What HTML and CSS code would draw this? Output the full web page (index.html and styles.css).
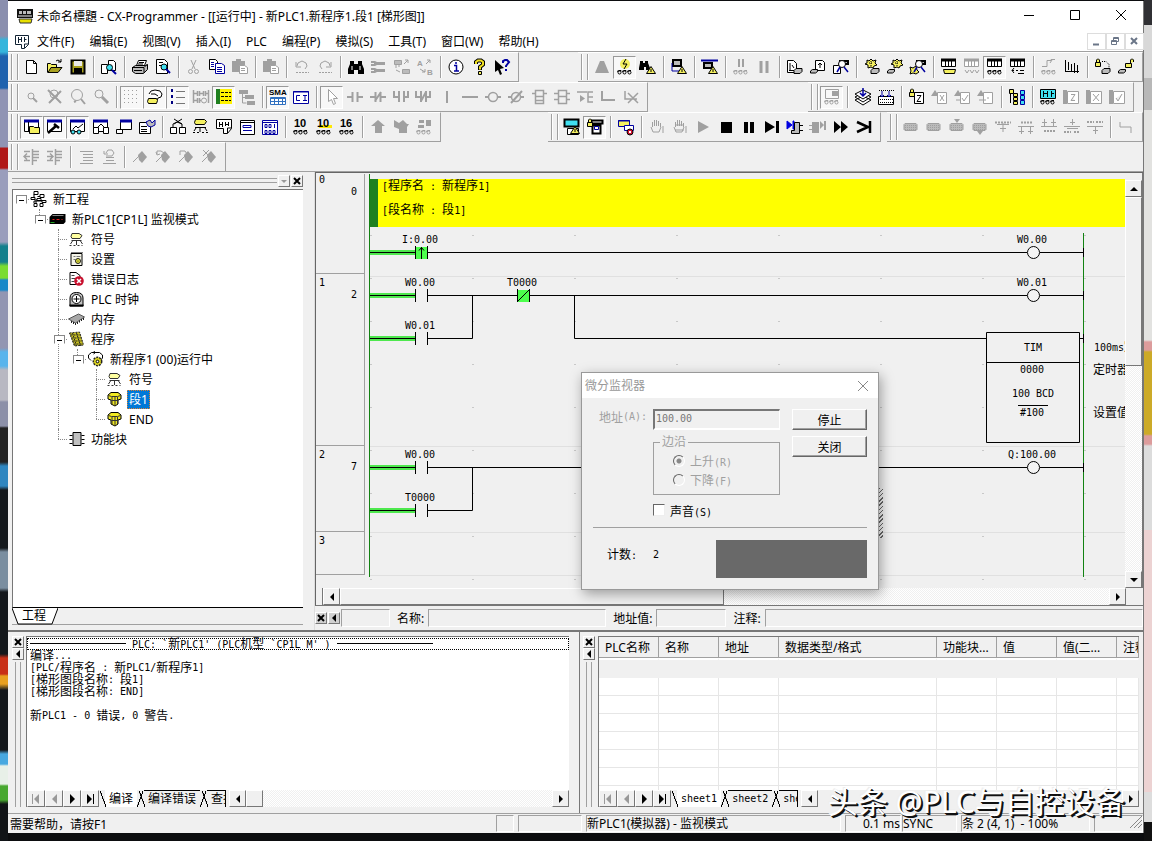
FILE: index.html
```html
<!DOCTYPE html>
<html lang="zh-CN">
<head>
  <meta charset="UTF-8">
  <meta name="viewport" content="width=device-width, initial-scale=1">
  <title>CX-Programmer</title>
  <link rel="stylesheet" href="styles.css">
</head>
<body>

<div class="window">

  <header class="titlebar">
    <svg class="app-icon" width="18" height="16" viewBox="0 0 18 16"><path d="M1 1h16v9H1z" fill="#111"/><path d="M3 3h3v3H3zM7 3h3v3H7zM11 3h4v3h-4z" fill="#bbb"/><path d="M2 8h14" stroke="#eee"/><path d="M3 11h13l-1 4H4z" fill="#e8e000" stroke="#333"/></svg>
    <h1>未命名標題 - CX-Programmer - [[运行中] - 新PLC1.新程序1.段1 [梯形图]]</h1>
    <div class="caption">
      <button type="button" aria-label="最小化"><svg width="12" height="12"><path d="M1 6.5h10"/></svg></button>
      <button type="button" aria-label="最大化"><svg width="12" height="12"><path d="M1.5 1.5h9v9h-9z"/></svg></button>
      <button type="button" aria-label="关闭"><svg width="12" height="12"><path d="M1 1l10 10M11 1L1 11"/></svg></button>
    </div>
  </header>

  <nav class="menubar">
    <svg class="doc-icon" width="16" height="15"><path d="M1.500 1.500h13v9l-4 4h-3v-4h-6zM4.500 3v6M4.500 5.500h3M7.500 3v5M10.500 3v5M10.500 5.500h2M10.500 14v-4h4"/></svg>
    <a href="#">文件(F)</a>
    <a href="#">编辑(E)</a>
    <a href="#">视图(V)</a>
    <a href="#">插入(I)</a>
    <a href="#">PLC</a>
    <a href="#">编程(P)</a>
    <a href="#">模拟(S)</a>
    <a href="#">工具(T)</a>
    <a href="#">窗口(W)</a>
    <a href="#">帮助(H)</a>
    <div class="mdi">
      <button type="button" aria-label="最小化"><svg width="11" height="11"><path d="M2 8.500h6" stroke-width="2"/></svg></button>
      <button type="button" aria-label="还原"><svg width="11" height="11"><path d="M1.500 4.500h5v4h-5zM3.500 4V1.500h5v4H7M1 5.500h6M3 2.500h6"/></svg></button>
      <button type="button" aria-label="关闭"><svg width="11" height="11"><path d="M2 2l6 6M8 2L2 8" stroke-width="2"/></svg></button>
    </div>
  </nav>

  <!-- los botones se generan en toolbars.js -->
  <div class="toolbars" id="toolbars"></div>

  <main class="workspace">
    <aside class="project">
      <div class="pane-head">
        <span class="grip"></span>
        <button type="button" class="mini off" aria-label="菜单"><svg width="8" height="8"><path d="M1 3h6L4 6z"/></svg></button>
        <button type="button" class="mini" aria-label="关闭"><svg width="8" height="8"><path d="M1 1l6 6M7 1L1 7" class="line"/></svg></button>
      </div>
      <div class="tree">
        <ul>
          <li><div class="node"><i class="box"></i><svg><use href="#t-project"/></svg><span>新工程</span></div>
            <ul>
              <li><div class="node"><i class="box"></i><svg><use href="#t-plc"/></svg><span>新PLC1[CP1L] 监视模式</span></div>
                <ul>
                  <li><div class="node"><i></i><svg><use href="#t-symbol"/></svg><span>符号</span></div></li>
                  <li><div class="node"><i></i><svg><use href="#t-settings"/></svg><span>设置</span></div></li>
                  <li><div class="node"><i></i><svg><use href="#t-error"/></svg><span>错误日志</span></div></li>
                  <li><div class="node"><i></i><svg><use href="#t-clock"/></svg><span>PLC 时钟</span></div></li>
                  <li><div class="node"><i></i><svg><use href="#t-memory"/></svg><span>内存</span></div></li>
                  <li><div class="node"><i class="box"></i><svg><use href="#t-programs"/></svg><span>程序</span></div>
                    <ul>
                      <li><div class="node"><i class="box"></i><svg><use href="#t-program"/></svg><span>新程序1 (00)运行中</span></div>
                        <ul>
                          <li><div class="node"><i></i><svg><use href="#t-symbol"/></svg><span>符号</span></div></li>
                          <li><div class="node"><i></i><svg><use href="#t-section"/></svg><span class="selected">段1</span></div></li>
                          <li><div class="node"><i></i><svg><use href="#t-section"/></svg><span>END</span></div></li>
                        </ul>
                      </li>
                    </ul>
                  </li>
                  <li><div class="node"><i></i><svg><use href="#t-block"/></svg><span>功能块</span></div></li>
                </ul>
              </li>
            </ul>
          </li>
        </ul>
      </div>
      <div class="tree-tabs"><svg width="46" height="17"><path d="M0 0h46l-5 16H6z" fill="#fff"/><path d="M0 0l6 16h34l6-16" fill="none" stroke="#000"/><text x="10" y="12">工程</text></svg></div>
    </aside>

    <section class="editor">
      <div class="ladder">
        <div class="gutter">
          <div class="rung r0"><b>0</b><em>0</em></div>
          <div class="rung r1"><b>1</b><em>2</em></div>
          <div class="rung r2"><b>2</b><em>7</em></div>
          <div class="rung r3"><b>3</b></div>
        </div>
        <svg class="diagram" role="img" aria-label="梯形图">
          <defs>
            <pattern id="dots" width="102" height="43" patternUnits="userSpaceOnUse" x="4" y="18"><path d="M0 0h2v1h-2z" fill="#c8c8c8"/></pattern>
          </defs>
          <rect x="4" y="56" width="100%" height="350" fill="url(#dots)"/>
          <path d="M4 102.500h756M4 272.500h756M4 358.500h756M4 401.500h756" stroke="#e0e0e0"/>
          <rect x="3" y="5" width="100%" height="48" fill="#ff0"/>
          <rect x="4" y="5" width="8" height="48" fill="#208020"/>
          <g class="live"><path d="M4 78.500h45M4 121.500h45M4 164.500h45M4 293.500h45M4 336.500h45"/></g>
          <rect x="50" y="73" width="11" height="12" fill="#4dff4d"/>
          <rect x="152" y="116" width="11" height="12" fill="#4dff4d"/>
          <g class="wire">
            <path d="M4 78.500h45M62 78.500h599M674 78.500h44"/>
            <path d="M4 121.500h45M62 121.500h89M164 121.500h497M674 121.500h44"/>
            <path d="M4 164.500h45M62 164.500h44.500V122M208.500 121v43.500H620M714 164.500h4"/>
            <path d="M4 293.500h45M62 293.500h599M674 293.500h44"/>
            <path d="M4 336.500h45M62 336.500h44.500V294"/>
            <path d="M49.500 72v13M61.500 72v13M49.500 115v13M61.500 115v13M49.500 158v13M61.500 158v13M49.500 287v13M61.500 287v13M49.500 330v13M61.500 330v13M151.500 115v13M163.500 115v13"/>
            <path d="M55.500 73v12M53 76.500l2.500-3 2.500 3M152 127l11-11"/>
            <circle cx="667.500" cy="78.500" r="6"/><circle cx="667.500" cy="121.500" r="6"/><circle cx="667.500" cy="293.500" r="6"/>
            <path d="M620.500 158.500h93v110h-93zM620 188.500h94M652 231.500h30"/>
          </g>
          <g fill="#128212"><rect x="3" y="0" width="1" height="403"/><rect x="717" y="59" width="1" height="344"/></g>
          <path d="M717.500 74v9M717.500 117v9M717.500 160v9M717.500 289v9" stroke="#000"/>
          <g class="code">
            <text x="16" y="16">[<tspan class="zh">程序名</tspan> : <tspan class="zh">新程序</tspan>1]</text>
            <text x="16" y="40">[<tspan class="zh">段名称</tspan> : <tspan class="zh">段</tspan>1]</text>
          </g>
          <g class="code mid">
            <text x="54" y="69">I:0.00</text>
            <text x="54" y="112">W0.00</text>
            <text x="54" y="155">W0.01</text>
            <text x="54" y="284">W0.00</text>
            <text x="54" y="327">T0000</text>
            <text x="156" y="112">T0000</text>
            <text x="666" y="69">W0.00</text>
            <text x="666" y="112">W0.01</text>
            <text x="666" y="284">Q:100.00</text>
            <text x="667" y="177">TIM</text>
            <text x="666" y="199">0000</text>
            <text x="667" y="223">100 BCD</text>
            <text x="666" y="242">#100</text>
          </g>
          <g class="code">
            <text x="728" y="177">100ms<tspan class="zh">定</tspan></text>
            <text x="727" y="200" class="zh">定时器</text>
            <text x="727" y="243" class="zh">设置值</text>
          </g>
        </svg>
        <div class="vscroll">
          <button type="button" class="sb" aria-label="向上"><svg width="8" height="8"><path d="M0 6h8L4 2z"/></svg></button>
          <div class="thumb"></div>
          <div class="track"></div>
          <button type="button" class="sb" aria-label="向下"><svg width="8" height="8"><path d="M0 2h8L4 6z"/></svg></button>
        </div>
      </div>
      <div class="hscroll">
        <span class="splitter"></span>
        <button type="button" class="sb" aria-label="向左"><svg width="8" height="8"><path d="M6 0v8L2 4z"/></svg></button>
        <div class="thumb"></div>
        <div class="track"></div>
        <button type="button" class="sb" aria-label="向右"><svg width="8" height="8"><path d="M2 0v8l4-4z"/></svg></button>
      </div>
      <div class="infobar">
        <button type="button" class="mini dark" aria-label="关闭"><svg width="8" height="8"><path d="M1 1l6 6M7 1L1 7" class="line"/></svg></button>
        <button type="button" class="mini dark" aria-label="收起"><svg width="8" height="8"><path d="M6 0v8L2 4z"/></svg></button>
        <output class="field short"></output>
        <span>名称:</span><output class="field name"></output>
        <span>地址值:</span><output class="field addr"></output>
        <span>注释:</span><output class="field note"></output>
      </div>
    </section>
  </main>

  <section class="bottom">
    <div class="panel output">
      <div class="side">
        <button type="button" class="mini" aria-label="关闭"><svg width="8" height="8"><path d="M1 1l6 6M7 1L1 7" class="line"/></svg></button>
        <button type="button" class="mini" aria-label="收起"><svg width="8" height="8"><path d="M6 0v8L2 4z"/></svg></button>
        <span class="grip"></span>
      </div>
      <div class="sunken">
        <div class="log">
          <p class="focus"><s></s><span>PLC: `<b>新</b>PLC1' (PLC<b>机型</b> `CP1L M' )</span><s></s></p>
          <p><b>编译</b>...</p>
          <p>[PLC/<b>程序名</b> : <b>新</b>PLC1/<b>新程序</b>1]</p>
          <p>[<b>梯形图段名称</b>: <b>段</b>1]</p>
          <p>[<b>梯形图段名称</b>: END]</p>
          <p>&nbsp;</p>
          <p><b>新</b>PLC1 - 0 <b>错误</b>, 0 <b>警告</b>.</p>
        </div>
        <div class="tabstrip">
          <button type="button" class="sb off" aria-label="第一"><svg width="10" height="10"><path d="M8 0v10L3 5zM1 0h1v10h-1z"/></svg></button>
          <button type="button" class="sb off" aria-label="上一"><svg width="10" height="10"><path d="M8 0v10L3 5z"/></svg></button>
          <button type="button" class="sb" aria-label="下一"><svg width="10" height="10"><path d="M3 0v10l5-5z"/></svg></button>
          <button type="button" class="sb" aria-label="最后"><svg width="10" height="10"><path d="M2 0v10l5-5zM8 0h1v10h-1z"/></svg></button>
          <div class="tabs">
            <button type="button" class="tab active">编译</button>
            <button type="button" class="tab">编译错误</button>
            <button type="button" class="tab">查找</button>
          </div>
          <div class="scroller">
            <button type="button" class="sb" aria-label="向左"><svg width="8" height="8"><path d="M6 0v8L2 4z"/></svg></button>
            <div class="thumb"></div>
            <div class="track"></div>
            <button type="button" class="sb" aria-label="向右"><svg width="8" height="8"><path d="M2 0v8l4-4z"/></svg></button>
          </div>
        </div>
      </div>
    </div>

    <div class="panel watch">
      <div class="side">
        <button type="button" class="mini" aria-label="关闭"><svg width="8" height="8"><path d="M1 1l6 6M7 1L1 7" class="line"/></svg></button>
        <button type="button" class="mini" aria-label="收起"><svg width="8" height="8"><path d="M6 0v8L2 4z"/></svg></button>
        <span class="grip"></span>
      </div>
      <div class="sunken">
        <div class="sheet">
          <table>
            <colgroup><col class="c60"><col class="c60"><col class="c60"><col class="c158"><col class="c60"><col class="c60"><col class="c60"><col></colgroup>
            <thead><tr><th>PLC名称</th><th>名称</th><th>地址</th><th>数据类型/格式</th><th>功能块...</th><th>值</th><th>值(二...</th><th>注释</th></tr></thead>
            <tbody id="rows"></tbody>
          </table>
        </div>
        <div class="tabstrip">
          <button type="button" class="sb off" aria-label="第一"><svg width="10" height="10"><path d="M8 0v10L3 5zM1 0h1v10h-1z"/></svg></button>
          <button type="button" class="sb off" aria-label="上一"><svg width="10" height="10"><path d="M8 0v10L3 5z"/></svg></button>
          <button type="button" class="sb" aria-label="下一"><svg width="10" height="10"><path d="M3 0v10l5-5z"/></svg></button>
          <button type="button" class="sb" aria-label="最后"><svg width="10" height="10"><path d="M2 0v10l5-5zM8 0h1v10h-1z"/></svg></button>
          <div class="tabs code">
            <button type="button" class="tab active">sheet1</button>
            <button type="button" class="tab">sheet2</button>
            <button type="button" class="tab">sheet3</button>
          </div>
          <div class="scroller">
            <button type="button" class="sb" aria-label="向左"><svg width="8" height="8"><path d="M6 0v8L2 4z"/></svg></button>
            <div class="track plain"></div>
            <button type="button" class="sb" aria-label="向右"><svg width="8" height="8"><path d="M2 0v8l4-4z"/></svg></button>
          </div>
        </div>
      </div>
    </div>
  </section>

  <footer class="status">
    <span class="help">需要帮助，请按F1</span>
    <span class="cell s1"></span>
    <span class="cell s2"></span>
    <span class="cell s3">新PLC1(模拟器) - 监视模式</span>
    <span class="cell s4">0.1 ms</span>
    <span class="cell s5">SYNC</span>
    <span class="cell s6">条 2 (4, 1) &nbsp;- 100%</span>
    <span class="cell s7"><svg width="12" height="12"><path d="M0 12L12 0M4 12l8-8M8 12l4-4" stroke="#888"/></svg></span>
  </footer>

  <div class="hatch"></div>

  <form class="dialog">
    <div class="dialog-title">
      <span>微分监视器</span>
      <button type="button" aria-label="关闭"><svg width="12" height="12"><path d="M1 1l10 10M11 1L1 11"/></svg></button>
    </div>
    <div class="dialog-body">
      <label class="off" for="address"><b>地址</b>(A):</label>
      <input type="text" id="address" value="100.00" disabled>
      <div class="actions">
        <button type="button">停止</button>
        <button type="button">关闭</button>
      </div>
      <fieldset disabled>
        <legend>边沿</legend>
        <label><input type="radio" name="edge" checked><span><b>上升</b>(R)</span></label>
        <label><input type="radio" name="edge"><span><b>下降</b>(F)</span></label>
      </fieldset>
      <label class="sound"><input type="checkbox"><span><b>声音</b>(S)</span></label>
      <hr>
      <div class="count"><b>计数</b>:</div>
      <div class="value">2</div>
      <div class="lamp"></div>
    </div>
  </form>

  <div class="watermark">头条 @PLC与自控设备</div>
</div>

<!-- iconos del árbol -->
<svg class="symbols" width="0" height="0">
  <symbol id="t-project" viewBox="0 0 16 16"><g fill="#fff" stroke="#000"><path d="M3.500 3v4M7 5.500h3M5.500 8v4M10 9.500h3M3.500 12v-2h9v2"/><path d="M3.500.500h4v3h-4zM9.500 3.500h4v3h-4zM.500 6.500h4v2h-4zM6.500 7.500h4v2h-4zM11.500 9.500h4v2h-4zM3.500 12.500h3v3h-3zM9.500 12.500h3v3h-3z"/></g></symbol>
  <symbol id="t-plc" viewBox="0 0 16 16"><path d="M0 6l3-3h13v8l-2 2H0z" fill="#000"/><path d="M3 4.500h11" stroke="#888"/><path d="M3 8.500h2M7 8.500h3M12 8.500h1" stroke="#e02020"/><path d="M1 11.500h4" stroke="#20a020"/></symbol>
  <symbol id="t-symbol" viewBox="0 0 16 16"><path d="M3.500 2.500h7l3 2-2 3h-8l-1-2z" fill="#ffffa0" stroke="#333"/><path d="M3 9.500h10M4 10l-2 3M8 10v4M12 10l2 3M1 14.500h2M5 14.500h2M9 14.500h2M13 14.500h1" stroke="#333"/></symbol>
  <symbol id="t-settings" viewBox="0 0 16 16"><path d="M2.500 2.500h11v12h-11z" fill="#f4f4e8" stroke="#000" /><path d="M3 1.500h11" stroke="#000" stroke-dasharray="1 1"/><path d="M5 5.500h2M8 5.500h4M5 8.500h2" stroke="#777"/><circle cx="9.500" cy="10" r="2.500" fill="#e8e840" stroke="#222"/><circle cx="9.500" cy="10" r=".6" fill="#000"/></symbol>
  <symbol id="t-error" viewBox="0 0 16 16"><path d="M1.500 1.500h6l4 3v9h-10z" fill="#fff" stroke="#000"/><path d="M3 4.500h3M3 7.500h4M3 10.500h3" stroke="#444"/><circle cx="10.500" cy="10" r="4.800" fill="#c8102e"/><path d="M8.500 8l4 4M12.500 8l-4 4" stroke="#fff" stroke-width="1.500"/></symbol>
  <symbol id="t-clock" viewBox="0 0 16 16"><path d="M1.500 15V7q0-5.500 6.500-5.500T14.500 7v8z" fill="#c0c0c0" stroke="#000"/><circle cx="8" cy="8" r="4.500" fill="#fff" stroke="#000"/><path d="M8 5v6M5 8h6" stroke="#000"/><path d="M1 14.500h14" stroke="#000" stroke-width="2"/></symbol>
  <symbol id="t-memory" viewBox="0 0 16 16"><path d="M0 8l10-5 6 3-9 6z" fill="#a8a8a8" stroke="#555"/><path d="M7 12v2M9 11v2M11 9.500v2M13 8v2M15 7v2M3 10v2M5 11v2" stroke="#222"/></symbol>
  <symbol id="t-programs" viewBox="0 0 16 16"><path d="M1 2l10-1 4 13-9 1z" fill="#c8c020"/><path d="M1 2l10-1 4 13-9 1z M2 4h10M3 7h10M4 10h10M5 13h9M4 2l4 13M8 2l4 13" fill="none" stroke="#222" stroke-dasharray="2 1"/></symbol>
  <symbol id="t-program" viewBox="0 0 16 16"><path d="M3.500 9.500L1 7V4l3-2.500h8L15 4v3l-2 2.500" fill="#fff" stroke="#000"/><path d="M6 0l2 1.500L6 3" fill="none" stroke="#000"/><circle cx="10" cy="10.500" r="4.200" fill="#d8d020" stroke="#222" stroke-width="1.500" stroke-dasharray="2 1"/><circle cx="10" cy="10.500" r="1.300" fill="#fff" stroke="#000"/></symbol>
  <symbol id="t-section" viewBox="0 0 16 16"><path d="M1.500 4l3-2.500h7l3 2.500v4l-3 1v4l-3 2-4-2V9l-3-1z" fill="#f0e820" stroke="#000"/><path d="M2 4.500l3 1h6l3-1M5.500 6v7M8.500 6v8M11 6v7M5 9.500h6" stroke="#333" fill="none"/></symbol>
  <symbol id="t-block" viewBox="0 0 16 16"><path d="M4.500 1.500h8v13h-8z" fill="#c0c0c0" stroke="#000"/><path d="M1 4.500h3M1 8.500h3M1 12.500h3M13 4.500h3M13 8.500h3M13 12.500h3" stroke="#000"/></symbol>
</svg>

<script src="toolbars.js"></script>
</body>
</html>
```

FILE: styles.css
```css
* {
  box-sizing: border-box;
}
html, body {
  height: 100%;
}
body {
  margin: 0;
  padding: 1px 8px 8px;
  font-family: "Noto Sans", "Noto Sans CJK SC", sans-serif;
  font-size: 12px;
  color: #000;
  overflow: hidden;
  background:
    linear-gradient(#303034 25px, #d8d8d8 25px 78px, #b8b8b8 78px 110px, #e2e2e0 110px 340px, #dc9c9c 342px 350px, #ccaa28 352px 434px, #dc9c9c 436px 444px, #dcdcdc 446px 530px, #ecd2d2 530px 792px, #ddd 792px 822px, #111 822px) right / 8px 100% no-repeat,
    linear-gradient(#8a8fae 36px, #35b5dc 40px 52px, #1f62ae 56px 88px, #9094b4 90px 147px, #b01818 148px 168px, #9a9ebc 170px 242px, #14808c 246px 262px, #7adc30 266px 278px, #1888c8 280px 290px, #9296b2 292px 348px, #58b4ec 352px 366px, #b8b8c2 370px 400px, #8c90a8 402px 426px, #222 428px 462px, #2f86c0 466px 486px, #15191d 490px 548px, #7a8ea0 552px 588px, #14181c 592px 654px, #c83018 658px 674px, #e8a020 676px 684px, #14181c 690px 750px, #48a8e0 754px 764px, #e8f0e8 766px 784px, #48a830 786px 800px, #111417 804px) left / 8px 100% no-repeat,
    #0c0d0f;
}
button, input {
  font-family: inherit;
  font-size: 12px;
  color: inherit;
}
button {
  padding: 0;
  border: 0;
  background: none;
}
b, em {
  font-weight: normal;
  font-style: normal;
}

.window {
  position: relative;
  display: flex;
  flex-direction: column;
  height: 100%;
  background: #f0f0f0;
  border-right: 1px solid #777;
}

/* título y menú */
.titlebar {
  display: flex;
  align-items: center;
  height: 30px;
  padding-left: 8px;
  background: #fff;
}
.titlebar h1 {
  flex: 1;
  margin: 0 0 0 3px;
  font-size: 12px;
  font-weight: normal;
}
.caption {
  display: flex;
  margin-right: -1px;
}
.caption button {
  width: 46px;
  height: 28px;
}
.caption svg, .dialog-title svg {
  stroke: #000;
  fill: none;
}
.menubar {
  display: flex;
  align-items: center;
  gap: 15px;
  height: 20px;
  padding-left: 6px;
  background: #fff;
}
.menubar a {
  color: #000;
  text-decoration: none;
}
.doc-icon {
  margin-right: -8px;
  fill: none;
  stroke: #123;
}
.mdi {
  display: flex;
  margin-left: auto;
  margin-right: -1px;
}
.mdi button {
  width: 19px;
  height: 17px;
  border: 1px solid #ddd;
}
.mdi svg {
  fill: none;
  stroke: #6b7688;
}

/* barras de herramientas */
.toolbars {
  border-top: 1px solid #a0a0a0;
  border-bottom: 1px solid #a0a0a0;
}
.row {
  display: flex;
  height: 30px;
  gap: 6px;
}
.row-2 {
  padding-right: 9px;
}
.group {
  display: flex;
  align-items: center;
  padding: 0 5px 0 3px;
  border-right: 1px solid #a0a0a0;
  border-bottom: 1px solid #a0a0a0;
  border-top: 1px solid #fff;
}
.row-4 {
  height: 29px;
}
.row-4 .group {
  border-bottom: 0;
}
.group.push {
  margin-left: auto;
}
.group::before {
  content: "";
  width: 5px;
  height: 26px;
  margin-right: 2px;
  border: solid #a0a0a0;
  border-width: 0 1px;
  box-shadow: inset 1px 0 #fff, 1px 0 #fff;
}
.sep {
  width: 8px;
  height: 22px;
  background: linear-gradient(90deg, transparent 4px, #a0a0a0 4px 5px, #fff 5px 6px, transparent 6px);
}
.tool {
  display: flex;
  align-items: center;
  justify-content: center;
  width: 23px;
  height: 23px;
  border: 1px solid transparent;
}
.tool.on {
  background: #f8f8f8;
  border-color: #999 #fff #fff #999;
}
.tool svg {
  width: 18px;
  height: 18px;
  fill: none;
  stroke: currentColor;
}
.tool:disabled {
  color: #a0a0a0;
}
.tool .w { fill: #fff; }
.tool .y { fill: #f4f060; }
.tool .o { fill: #a8a020; }
.tool .c { fill: #40e0f0; }
.tool .b { stroke: #0000a0; }
.tool .s { fill: currentColor; stroke: none; }
.tool .gy { fill: #bbb; }
.tool:disabled .y, .tool:disabled .o, .tool:disabled .c { fill: #ccc; }
.tool:disabled .b { stroke: #a0a0a0; }
.tool text {
  stroke: none;
  fill: currentColor;
  font: bold 11px "Liberation Sans", sans-serif;
}
.tool text.sm {
  font-size: 8px;
}

/* paneles */
.workspace {
  display: flex;
  flex: 1;
  min-height: 0;
}
.grip {
  border: solid #a0a0a0;
  border-width: 1px 0;
}
.mini {
  display: flex;
  align-items: center;
  justify-content: center;
  flex: none;
  width: 12px;
  height: 12px;
  background: #f0f0f0;
  border: 1px solid;
  border-color: #fff #777 #777 #fff;
}
.mini.dark {
  background: #d0d0d0;
}
.mini .line {
  stroke: #000;
  stroke-width: 2;
}
.mini.off, .sb.off {
  fill: #999;
}
.project {
  display: flex;
  flex-direction: column;
  width: 307px;
  padding: 0 11px 0 4px;
  border-right: 1px solid #ddd;
}
.pane-head {
  display: flex;
  align-items: center;
  gap: 1px;
  height: 17px;
}
.pane-head .grip {
  flex: 1;
  height: 5px;
}
.tree {
  flex: 1;
  background: #fff;
  border: solid #777;
  border-width: 1px 0 0 1px;
  border-bottom: 1px solid #000;
}
.tree ul {
  margin: 0;
  padding: 0;
  list-style: none;
}
.tree > ul {
  margin: -1px 0 0 -1px;
}
.tree li ul {
  margin-left: 19px;
}
.tree li {
  position: relative;
}
.tree li li::before {
  content: "";
  position: absolute;
  left: 8px;
  top: 0;
  bottom: 0;
  border-left: 1px dotted #888;
}
.tree li li:last-child::before {
  bottom: auto;
  height: 10px;
}
.node {
  display: flex;
  align-items: center;
  height: 20px;
}
.node i {
  width: 18px;
  height: 9px;
  background: linear-gradient(90deg, #888 1px, transparent 1px) 8px 4px / 2px 1px repeat-x;
}
.node i.box {
  clip-path: inset(0 0 0 4px);
}
.node i:not(.box) {
  clip-path: inset(0 0 0 8px);
}
.node i.box::before {
  content: "";
  display: block;
  width: 9px;
  height: 9px;
  margin-left: 4px;
  border: 1px solid #888;
  background: linear-gradient(#000, #000) center / 5px 1px no-repeat #fff;
}
.node svg {
  width: 17px;
  height: 16px;
}
.node span {
  margin-left: 4px;
  padding: 0 2px;
  line-height: 19px;
  white-space: nowrap;
}
.node .selected {
  background: #0078d7;
  color: #fff;
  outline: 1px dotted #e08030;
  outline-offset: -1px;
}
.tree-tabs {
  height: 17px;
  border-bottom: 1px solid #a0a0a0;
  margin-bottom: 5px;
}

/* diagrama */
.editor {
  flex: 1;
  display: flex;
  flex-direction: column;
  min-width: 0;
  border-top: 1px solid #666;
}
.ladder {
  flex: 1;
  display: flex;
  min-height: 0;
  border-left: 1px solid #666;
  border-right: 1px solid #777;
}
.code, .rung, .log, .dialog {
  font-family: "DejaVu Sans Mono", "Noto Sans CJK SC", monospace;
  font-size: 10px;
}
.zh {
  font-size: 12px;
}
.gutter {
  width: 50px;
  padding: 1px 1px 0 0;
}
.rung {
  padding: 0 3px;
  border: solid #a0a0a0;
  border-width: 0 1px 1px 0;
  line-height: 12px;
}
.rung b, .rung em {
  display: block;
}
.rung em {
  text-align: right;
  padding-right: 4px;
}
.r0 { height: 100px; }
.r1 { height: 172px; padding-top: 3px; }
.r2 { height: 86px; padding-top: 3px; }
.r3 { height: 43px; padding-top: 3px; }
.diagram {
  flex: 1;
  min-width: 0;
  height: 100%;
  margin-top: 1px;
  overflow: hidden;
}
.live {
  stroke: #4ee84e;
  stroke-width: 5;
}
.wire {
  fill: none;
  stroke: #000;
}
.wire circle {
  fill: #f4f4f4;
}
.mid {
  text-anchor: middle;
}
.vscroll {
  display: flex;
  flex-direction: column;
  width: 17px;
  padding-top: 7px;
}
.sb {
  display: flex;
  align-items: center;
  justify-content: center;
  flex: none;
  width: 17px;
  height: 17px;
  background: #f0f0f0;
  border: 1px solid;
  border-color: #fff #777 #777 #fff;
}
.vscroll .thumb {
  height: 169px;
}
.thumb {
  background: #f0f0f0;
  border: 1px solid;
  border-color: #fff #777 #777 #fff;
}
.track {
  flex: 1;
  background: repeating-conic-gradient(#fff 0 25%, #f0f0f0 0 50%) 0 0 / 2px 2px;
}
.hscroll {
  display: flex;
  height: 18px;
  padding-right: 17px;
  border-left: 1px solid #666;
  border-bottom: 1px solid #777;
}
.hscroll .thumb {
  width: 384px;
}
.splitter {
  width: 7px;
  border-right: 1px solid #777;
}
.infobar {
  display: flex;
  align-items: center;
  height: 24px;
  gap: 1px;
}
.infobar span {
  padding: 0 3px 0 6px;
  white-space: nowrap;
}
.field {
  height: 18px;
  border: 1px solid;
  border-color: #a0a0a0 #fff #fff #a0a0a0;
}
.field.short { width: 49px; }
.field.name { width: 178px; }
.field.addr { width: 70px; }
.field.note { flex: 1; }

/* salida y observación */
.bottom {
  display: flex;
  height: 184px;
  border-top: 2px solid #777;
  border-bottom: 1px solid #a0a0a0;
}
.panel {
  display: flex;
  padding: 4px 0 6px;
}
.output {
  width: 572px;
  padding-right: 10px;
  border-right: 1px solid #777;
}
.watch {
  flex: 1;
  min-width: 0;
  padding-right: 4px;
}
.side {
  display: flex;
  flex-direction: column;
  align-items: center;
  width: 18px;
  padding: 0 2px 0 3px;
}
.watch .side {
  padding: 0 3px 0 2px;
}
.side .grip {
  flex: 1;
  width: 6px;
  margin-top: 2px;
  border-width: 0 1px;
}
.sunken {
  flex: 1;
  display: flex;
  flex-direction: column;
  min-width: 0;
  background: #fff;
  border: solid #777;
  border-width: 1px 0 0 1px;
}
.log {
  flex: 1;
  padding-top: 1px;
  line-height: 12px;
}
.log p {
  display: flex;
  height: 12px;
  margin: 0;
  padding-left: 3px;
  white-space: pre;
}
.log b, .dialog b {
  font-size: 12px;
}
.log .focus {
  gap: 6px;
  outline: 1px dotted #000;
  outline-offset: -1px;
}
.log s {
  width: 96px;
  height: 1px;
  margin-top: 5px;
  background: #000;
}
.tabstrip {
  display: flex;
  height: 17px;
  background: #f0f0f0;
}
.tabstrip > .sb {
  width: 18px;
}
.tabs {
  display: flex;
  width: 127px;
  padding-left: 6px;
  overflow: hidden;
  border-right: 1px solid #000;
}
.tab {
  position: relative;
  flex: none;
  height: 17px;
  margin-right: 7px;
  padding: 0 4px;
  border-top: 1px solid #000;
  line-height: 14px;
}
.tabs.code .tab {
  font-size: 10px;
}
.tab::before, .tab::after {
  content: "";
  position: absolute;
  top: 0;
  height: 16px;
  width: 6px;
}
.tab::before {
  left: -5px;
  background: linear-gradient(to top right, transparent 46%, #000 47% 55%, transparent 56%);
}
.tab::after {
  right: -6px;
  background: linear-gradient(to bottom right, transparent 46%, #000 47% 55%, transparent 56%);
}
.tab.active {
  background: #fff;
  border-top-color: #fff;
}
.scroller {
  display: flex;
  flex: 1;
  padding-left: 3px;
}
.scroller .thumb {
  width: 17px;
}
.track.plain {
  background: #f0f0f0;
}
.sheet {
  flex: 1;
  min-height: 0;
  overflow: hidden;
}
table {
  width: 100%;
  table-layout: fixed;
  border-collapse: separate;
  border-spacing: 0;
}
.c60 { width: 60px; }
.c158 { width: 158px; }
th {
  height: 21px;
  padding: 1px 0 0 6px;
  background: #f0f0f0;
  border: solid #a0a0a0;
  border-width: 0 1px 1px 0;
  font-weight: normal;
  text-align: left;
  line-height: 18px;
  white-space: nowrap;
  overflow: hidden;
}
td {
  height: 18px;
  padding: 0;
  border: solid #e6e6e6;
  border-width: 0 1px 1px 0;
}
tr.current td {
  height: 20px;
  background: #f0f0f0;
  border-color: #f0f0f0;
  border-top: 2px solid #fff;
}

/* barra de estado */
.status {
  display: flex;
  align-items: center;
  gap: 4px;
  height: 19px;
  padding: 1px 0 1px 2px;
  white-space: nowrap;
}
.help {
  flex: 1;
}
.cell {
  height: 17px;
  line-height: 16px;
  border: 1px solid;
  border-color: #a0a0a0 #fff #fff #a0a0a0;
}
.s1 { width: 18px; }
.s2 { width: 64px; }
.s3 { width: 255px; }
.s4 { width: 56px; text-align: right; margin-right: -3px; }
.s5 { width: 55px; }
.s6 { width: 129px; }
.s7 { width: 49px; text-align: right; }

/* ventana flotante */
.hatch {
  position: absolute;
  left: 871px;
  top: 487px;
  width: 4px;
  height: 50px;
  background: repeating-linear-gradient(135deg, #666 0 1px, #f0f0f0 1px 3px);
}
.dialog {
  position: absolute;
  left: 573px;
  top: 371px;
  width: 298px;
  background: #f0f0f0;
  border: 1px solid #999;
  box-shadow: 2px 4px 12px rgba(0,0,0,0.35);
}
.dialog-title {
  display: flex;
  justify-content: space-between;
  align-items: center;
  height: 25px;
  padding: 0 9px 0 3px;
  background: #fff;
  color: #999;
  font-size: 12px;
  line-height: 20px;
}
.dialog-title svg {
  display: block;
  stroke: #888;
}
.dialog-body {
  display: grid;
  grid-template-columns: 42px 127px 1fr;
  column-gap: 12px;
  padding: 11px 11px 11px 17px;
}
.dialog label {
  display: flex;
  align-items: center;
  white-space: nowrap;
}
.dialog .off {
  color: #a0a0a0;
  height: 14px;
}
.dialog input[type="text"] {
  width: 127px;
  height: 21px;
  padding: 0 1px 2px;
  background: #f0f0f0;
  border: 2px solid;
  border-color: #777 #fff #fff #777;
  border-right-width: 1px;
  font-size: 10px;
  color: #777;
}
.actions {
  grid-column: 3;
  grid-row: 1 / 3;
  display: flex;
  flex-direction: column;
  gap: 6px;
}
.actions button {
  height: 21px;
  border: 1px solid;
  border-color: #fff #666 #666 #fff;
  box-shadow: inset -1px -1px #a0a0a0;
}
.dialog fieldset {
  grid-column: 2;
  height: 60px;
  min-width: 0;
  margin: 5px 0 0;
  padding: 2px 0 0 19px;
  border: 1px solid #a0a0a0;
  color: #a0a0a0;
}
.dialog legend {
  margin-left: -13px;
  padding: 0 2px;
  font-size: 12px;
  line-height: 14px;
}
.dialog fieldset label {
  gap: 5px;
  height: 19px;
}
.dialog input[type="radio"] {
  appearance: none;
  width: 12px;
  height: 12px;
  margin: 0;
  border: 1px solid;
  border-color: #666 #fff #fff #666;
  border-radius: 50%;
}
.dialog input[type="radio"]:checked {
  background: radial-gradient(#888 2px, transparent 3px);
}
.sound {
  grid-column: 2;
  gap: 5px;
  height: 18px;
  margin-top: 6px;
}
.dialog input[type="checkbox"] {
  appearance: none;
  width: 12px;
  height: 12px;
  margin: 0;
  background: #fff;
  border: 1px solid;
  border-color: #666 #eee #eee #666;
}
.dialog hr {
  grid-column: 1 / 4;
  width: 274px;
  height: 2px;
  margin: 8px 0 11px -6px;
  border: solid #a0a0a0;
  border-width: 1px 0 0;
}
.count, .value {
  grid-row: 5;
  line-height: 30px;
}
.count {
  padding-left: 8px;
}
.dialog .value {
  grid-column: 2;
  font-size: 10px;
}
.lamp {
  grid-column: 2 / 4;
  grid-row: 5;
  justify-self: end;
  width: 151px;
  height: 38px;
  background: #696969;
}

.watermark {
  position: absolute;
  right: 18px;
  bottom: 16px;
  color: #fff;
  font-family: "Noto Sans", "Noto Sans CJK SC", sans-serif;
  font-size: 30px;
  line-height: 30px;
  white-space: nowrap;
  text-shadow: 2px 2px 0 #111, 1px 1px 0 #111, -1px -1px 0 #eee;
}
.symbols {
  position: absolute;
}
```

FILE: toolbars.js
```js
// piezas repetidas
const wheels = '<path d="M1 13.500l2-1h2l1 1 2-1h2l1 1 2-1h2"/><circle cx="3.500" cy="14.500" r="1.500"/><circle cx="8.500" cy="14.500" r="1.500"/><circle cx="13.500" cy="14.500" r="1.500"/>';
const warn = '<path class="y" d="M12 8.500l4.500 7h-9z"/><path d="M12 11v3"/>';
const chip = '<path class="gy" d="M8 12.500l2-2h6v3l-2 2H8z"/>';
const plc = '<path class="w" d="M1.500 2.500h14v6h-14zM5.500 3v5M8.500 3v5M11.500 3v5"/><path d="M1 2h15" stroke-width="3"/>';
const gear = '<path class="y" d="M4 2l2 1 2-2 2 2 3-1-1 3 2 2-3 1-1 2-2-1-3 1V7L2 6l2-1z"/><path d="M6 5h4M8 3v5" stroke-dasharray="1 1"/>';
const lens = '<circle class="w" cx="10" cy="6" r="3.500"/><path class="b" d="M12 9l4 5M8 9l-3 5" stroke-width="1.500"/>';
const win = '<path class="w" d="M1.500 2.500h14v11h-14z"/><path class="b" d="M1 3h15" stroke-width="3"/>';
const page = '<path class="w" d="M6.500 4.500h9v11h-9z"/>';
const lockA = '<path class="y" d="M1.500 4.500h5v4h-5zM2.500 4V2l1-1h1l1 1v2"/>';
const flag = '<path class="s" d="M7 7l4-4 5 6-5 6-3-3z"/><path d="M2 14l6-6"/>';
const hand = '<path d="M3 9l2 5h6l2-5M4.500 9V4M6.500 8V2M8.500 8V2M10.500 8V3M12.500 9V5"/>';
const hatchBox = '<path class="gy" d="M3 5.500h11l1 1v5l-1 1H3l-1-1v-5z"/><path d="M3 7.500h12M3 9.500h12M3 11.500h12" stroke-dasharray="1 1"/>';

const icons = {
  new: '<path class="w" d="M3.500 2.500h7l3 3v10h-10zM10.500 2.500v3h3"/>',
  open: '<path class="y" d="M1.500 14.500v-9h3l1 1h5v3"/><path class="o" d="M2 14.500l3-5h11l-4 5z"/><path d="M10 3l2-1 3 2M15 1v3h-3"/>',
  save: '<path class="o" d="M2.500 2.500h13v13h-13z" stroke-width="2"/><path d="M5 3h8v5H5z" fill="#e8e8e8" stroke="none"/><path class="s" d="M5 10h8v5H5z"/>',
  search: '<path class="w" d="M1.500 6.500h6v9h-6zM8.500 2.500h5l2 2v8h-7z"/><circle class="c" cx="9.500" cy="9.500" r="3"/><path class="b" d="M12 12l4 4" stroke-width="2"/>',
  print: '<path class="w" d="M5.500 7.500l2-5h8l-2 5z"/><path class="gy" d="M1.500 9.500l3-2h10l2-1v5l-4 4h-8l-3-2z"/><path d="M1 9.500h12l3-3M13 10v5M3 12.500h8M8 4.500h5M7 6h5"/>',
  preview: '<path class="w" d="M2.500 1.500h8l3 3v11h-11z"/><path d="M5 4.500h4M5 7.500h2"/><circle class="c" cx="10" cy="9" r="3"/><path class="b" d="M12 11l4 4" stroke-width="2"/>',
  cut: '<path d="M6 2l4 9M11 2L7 11"/><circle cx="5.500" cy="13.500" r="2"/><circle cx="11.500" cy="13.500" r="2"/>',
  copy: '<path class="w" d="M1.500 1.500h6l2 2v8h-8z"/><path class="w b" d="M7.500 5.500h6l3 2v8h-9z"/><path class="b" d="M9 9.500h5M9 11.500h5M9 13.500h5M3 4.500h3M3 6.500h3M3 8.500h3"/>',
  paste: '<path class="s" d="M1 3h4V1h5v2h4v11H1z"/><path class="w" d="M8.500 7.500h5l3 2v6h-8z"/><path d="M10 10.500h4M10 12.500h4"/>',
  undo: '<path d="M4 8l1-3 4-2 4 2 1 3-2 3M3 4v5h5"/><path d="M3 14.500h13" stroke-dasharray="2 1"/>',
  redo: '<path d="M14 8l-1-3-4-2-4 2-1 3 2 3M15 4v5h-5"/><path d="M3 14.500h13" stroke-dasharray="2 1"/>',
  find: '<path class="s" d="M3 3h4v3h4V3h4v3l2 5v5h-6v-4H7v4H1v-5l2-5z"/><path d="M5 8v4M13 8v4" stroke="#fff"/>',
  replace: '<path class="s" d="M1 3h4l2 1h8v3H7L5 8H1zM1 10h4l2 1h8v3H7l-2 1H1z"/><path d="M1 5.500h3M1 12.500h3" stroke="#f0f0f0"/>',
  chg1: '<path class="gy" d="M1.500 2.500h7v4h-7zM9.500 11.500h7v4h-7z"/><path d="M3 7v3M6 7v2M11 6l4-4M12 2h3v3M3 12l4 2"/>',
  chg2: '<text class="sm" x="1" y="8">A</text><text class="sm" x="11" y="17">B</text><path d="M10 6l4-4M11 2h3v3M4 11l5 3M9 11v3H6"/>',
  info: '<circle class="w" cx="9" cy="9" r="7"/><path class="b" d="M7 7.500h2.500v5M7 13h5M9 4v2" stroke-width="1.500"/>',
  help: '<path d="M6 6V4l2-1.500h3L13 4v2.500L10 9v3" stroke-width="4"/><path d="M6 6V4l2-1.500h3L13 4v2.500L10 9v2.500" stroke="#f0e020" stroke-width="2"/><path class="y" d="M8.500 13.500h3v3h-3z"/>',
  whats: '<path class="s" d="M2 2l9 8-4 1 2 5-2 1-2-5-3 2z"/><path class="b" d="M10 5V3l2-1h2l2 2-3 4v1M13 11v2" stroke-width="2"/>',
  tri: '<path class="s" d="M7 3h4l5 12H2z"/>',
  live: '<circle class="y" cx="9" cy="6" r="5" stroke="none"/><path d="M10 1L7 6h4L8 11"/>' + wheels,
  findwarn: '<path class="s" d="M1 3h3v2h2V3h3v2l2 5v2H7V9H5v3H0v-2l1-5z"/>' + warn,
  plcwarn: '<path class="gy" d="M3 2h8v6H3z" stroke-width="2"/><path class="b" d="M2 5v8h7"/>' + warn,
  plcwarn2: '<path class="b" d="M0 2.500h17" stroke-width="2"/><path class="gy" d="M3 5h8v5H3z" stroke-width="2"/>' + warn,
  pausemon: '<path d="M7 1v8M11 1v8" stroke-width="2"/>' + wheels,
  pauseg: '<path d="M6 3v12M12 3v12" stroke-width="3"/>',
  dl: '<path class="w" d="M1.500 2.500h6l3 3v9h-9z"/><path d="M4 5v7M6 7l2 3M3 12.500h5"/>' + chip,
  ul: '<path class="w" d="M6.500 2.500h7l2 2v8h-9z"/><path d="M11 5v5M9 7l2-2 2 2"/><path class="gy" d="M1.500 13l2-1.500h5v2l-2 1.500h-5z"/>',
  cmp: '<path class="w" d="M1.500 7.500h7v8h-7z"/><path class="gy" d="M8 3h8v3H8z" stroke-width="2"/>' + lens,
  gear1: gear + chip, gear2: '<g transform="translate(3 0)">' + gear + '</g><path class="gy" d="M1.500 13l2-1.500h5v2l-2 1.500h-5z"/>',
  gear3: '<path class="y" d="M1 9l3 1 3-2 1 4 2 2-3 2-3-1-3 1 1-3z"/><path class="gy" d="M8 3h8v3H8z" stroke-width="2"/>' + lens,
  plc1: plc + '<path class="y" d="M3.500 11.500h12l-1 4h-10z"/>',
  plc2: plc + '<path d="M2 12l2 3 2-3M7 12l2 3 2-3M12 12l2 3 2-3"/>',
  plc3: plc + wheels,
  plc4: plc + '<path d="M3 12.500h2M7 12.500h2M11 12.500h4M5 10l-2 2.500 2 2.500M9 15.500h6"/>',
  wave: '<path d="M2 8.500h5v-6h4v-1h4M10 5l2-3"/>' + wheels,
  timing: '<path d="M2.500 2v12M2 13.500h14M5.500 4v8M8.500 6v8M11.500 5v10M14.500 7v8"/>',
  lock: lockA + chip + '<path d="M8 3.500h4l3 3v3" stroke-dasharray="1 1"/>',
  unlock: '<path class="y" d="M8.500 5.500h6v4h-6zM13.500 5V2l1-1h1l1 1v2"/><path class="gy" d="M1.500 13l2-1.500h5v2l-2 1.500h-5z"/>',

  zooms: '<circle cx="8" cy="8" r="3"/><path d="M10 10l4 4" stroke-width="2"/>',
  zoomx: '<circle cx="8" cy="6" r="4"/><path d="M2 2l13 13M15 3L3 15" stroke-width="2"/>',
  zoomo: '<circle cx="8" cy="7" r="5.500"/><path d="M12 11l4 5M5 14l2-1" stroke-width="2"/>',
  zoomi: '<circle cx="7" cy="6" r="4"/><path d="M10 9l6 6" stroke-width="3"/>',
  grid: '<path d="M1 2.500h16M1 6.500h16M1 10.500h16M1 14.500h16" stroke-dasharray="1 3"/>',
  comment: '<path class="w" d="M3 6l2-3 4-1 5 1 2 3-1 3-3 1-1 2"/><path class="y" d="M2.500 10.500h8l1 2-1 3h-8l-1-2z"/><path d="M5 6h4l3 2"/>',
  list: '<path fill="#000080" stroke="none" d="M2 1h2v3H2zM2 7h2v3H2zM2 13h2v3H2z"/><path d="M7 3.500h9M7 9.500h9M7 15.500h9" stroke="#777"/>',
  rungs: '<path d="M1.500 2v13M16.500 2v13M2 5.500h3M7 5.500h4M13 5.500h3M2 12.500h3M7 12.500h2M5.500 3v5M7.500 3v5M11.500 3v5M13.500 3v5M5.500 10v5M7.500 10v5" stroke-width="1.500"/><circle cx="12" cy="12.500" r="2.500"/>',
  ladder: '<path d="M1 1h4v15H1z" fill="#208020" stroke="none"/><path d="M5 1h12v15H5z" fill="#fff200" stroke="none"/><path d="M6 4.500h10M6 8.500h10M6 12.500h10" stroke-dasharray="3 1"/>',
  tree: '<path class="s" d="M1 2h9v4H1zM7 7h9v4H7zM9 13h8v4H9z"/><path d="M4.500 6v9h4M5 9.500h2"/>',
  sma: '<text class="sm" x="0" y="7">SMA</text><path fill="#fff" d="M1.500 9.500h15v7h-15z" stroke="#3070c0"/><path d="M1 10.500h16M1 13.500h16M5.500 10v7M9.500 10v7M13.500 10v7" stroke="#3070c0"/>',
  ci: '<path class="w b" d="M1.500 3.500h15v12h-15zM1 4h16"/><path class="b" d="M8 7.500H4.500v5H8M11 7.500h4M13 7v6M11 12.500h4"/>',
  ptr: '<path class="w" d="M5.500 1.500v12l3-2 2 5 2-1-2-5h4z"/>',
  no: '<path d="M1 9h5M12 9h5M6.500 4v10M11.500 4v10" stroke-width="2"/>',
  nc: '<path d="M1 9h5M12 9h5M6.500 4v10M11.500 4v10M6 13l6-9" stroke-width="2"/>',
  orno: '<path d="M2 3v6h4M7 3v11M12 3v11M12 9h4V3" stroke-width="2"/>',
  ornc: '<path d="M1 3v6h4M6 3v11M11 3v11M11 9h4V3M6 13l5-9" stroke-width="2"/>',
  vl: '<path d="M9 3v12" stroke-width="2"/>',
  hl: '<path d="M1 9h16" stroke-width="2"/>',
  coil: '<circle cx="9" cy="9" r="4.500" stroke-width="1.500"/><path d="M1 9h4M13 9h4" stroke-width="2"/>',
  coilc: '<circle cx="9" cy="9" r="4.500" stroke-width="1.500"/><path d="M1 9h4M13 9h4M4 15L15 3" stroke-width="2"/>',
  fb: '<path d="M5.500 2.500h8v13h-8zM5 8.500h8M2 5.500h3M14 5.500h3M5 12.500h8" stroke-width="1.500"/>',
  fb2: '<path d="M5.500 2.500h8v13h-8zM5 8.500h8M1 5.500h4M1 11.500h4M14 5.500h3M14 11.500h3" stroke-width="1.500"/>',
  inst: '<path class="s" d="M4 7v7l5-3.500z"/><path d="M1 4h10M17 4h-5v10h5M12 9h5" stroke-width="1.500"/>',
  line: '<path d="M3 3v9h13" stroke-width="2"/>',
  linex: '<path d="M3 3v8h12M6 5l10 10M16 5L6 15" stroke-width="1.500"/>',

  mon: '<path d="M2.500 1.500h13v9h-13z"/><path class="s" d="M9 3h6v5H9z"/>' + wheels,
  layers: '<path class="w" d="M1 12l8-4 8 4-8 5zM1 9l8-4 8 4-8 5z"/><path class="w" d="M1 6l8-4 8 4-8 5z"/><path class="b" d="M9 0v7M6 5l3 3 3-3" stroke-width="1.500"/>',
  grid2: '<path class="w" d="M1.500 8.500h15v8h-15z"/><path d="M3 11.500h13M3 14.500h13M2 2.500h15" stroke-dasharray="1 1"/><path class="b" d="M5 3v6M3 7l2 2 2-2M12 3v6M10 7l2 2 2-2"/>',
  watchdoc: lockA + page + '<path d="M9 7.500h4l-4 6h4"/>',
  a1: '<path class="s" d="M4 2l4 6H0z"/>' + page + '<path d="M9 7l4 6M13 7l-4 6"/>',
  a2: '<path class="s" d="M4 2l4 6H0z"/>' + page + '<path d="M2 12h4M8 10l2 3 4-6"/>',
  a3: '<path class="s" d="M4 2l4 6H0z"/>' + page + '<path d="M2 12h7M10 10h2"/>',
  treeboxes: '<path class="y" d="M1.500 1.500h4v4h-4zM5.500 5.500h4v3h-4zM5.500 9.500h4v3h-4zM5.500 13.500h4v3h-4zM2.500 6v9"/><path class="c b" d="M12.500 2.500h4v4h-4zM12.500 7.500h4v4h-4zM12.500 12.500h4v4h-4z"/>',
  ff: '<path class="c" d="M1.500 1.500h15v9h-15z"/><path d="M4.500 3v6M4 5.500h4M8.500 3v6M12.500 3v6M12 5.500h3"/>' + wheels,
  doc1: '<path class="s" d="M1 2h4v14H1z"/><path class="w" d="M5.500 3.500h11v12h-11zM9 6.500h4l-4 6h4"/>',
  doc2: '<path class="s" d="M1 2h4v14H1z"/><path class="w" d="M5.500 3.500h11v12h-11zM8 6l6 7M14 6l-6 7"/>',
  doc3: '<path class="s" d="M1 2h4v14H1z"/><path class="w" d="M5.500 3.500h11v12h-11zM8 10l2 3 4-7"/>',

  w1: win + '<path d="M5.500 4v9"/><path class="y" d="M6.500 8.500h4l1 1h5v6h-10z"/>',
  w2: win + '<path d="M2 15L10 8M8 6l5 4" stroke-width="2.500"/>',
  w3: win + '<path d="M4 11l3-3 2 2 5-4"/><circle class="c" cx="4" cy="14" r="2"/><circle class="c" cx="10" cy="14" r="2"/>',
  w4: win + '<path class="w" d="M1.500 9.500h5v6h-5zM11.500 9.500h5v6h-5z"/><path d="M6 9l3-3 3 3"/>',
  w5: '<path class="w" d="M5.500 2.500h11v9h-11zM1.500 11.500h6v4h-6z"/><path class="b" d="M5 3h12" stroke-width="3"/>',
  w6: '<path class="w" d="M1.500 4.500h11v11h-11z"/><path d="M3 8.500h6M3 11.500h6M3 13.500h6"/><path class="gy b" d="M8 4l4-2 2 3 3-3v5l-4 2-3-1z"/>',
  cross: '<path class="w" d="M1.500 9.500h6v6h-6zM10.500 9.500h6v6h-6z"/><path d="M4 9V6l4-2 5 2v3M5 1l8 5M13 1L5 6"/>',
  sym: '<path class="y" d="M3.500 1.500h9l2 2-2 3h-9l-1-2z"/><path d="M3 9.500h11M4 10l-2 3M8 10v4M13 10l2 3M1 14.500h2M5 14.500h2M10 14.500h2M14 14.500h2"/>',
  ff2: '<path class="w" d="M1.500 1.500h15v9l-4 5h-4v-5h-7zM4.500 4v5M4 6.500h3M7.500 4v5M10.500 4v4M13.500 4v4M11 6.500h3M12.500 15v-5h4"/>',
  list2: '<path class="w" d="M2.500 2.500h14v14h-14zM2 4.500h14"/><path class="b" d="M5 7.500h8v2H5zM5 12.500h9"/>',
  hex: '<path class="w b" d="M1.500 2.500h15v14h-15zM2 4.500h14"/><path class="b" d="M4 6.500h2v3H4zM8 6.500h2v3H8zM13.500 6v4M4 12.500h2v3H4zM8 12.500h2v3H8zM12 12.500h2v3h-2z"/>',
  n10: '<text x="2" y="9">10</text>' + wheels,
  n10y: '<path d="M4 7h13v3H4z" fill="#ffe800" stroke="none"/><text x="2" y="9">10</text>' + wheels,
  n16: '<text x="2" y="9">16</text>' + wheels,
  up: '<path class="s" d="M2 8l7-6 7 6h-3v7H6V8z"/>',
  down: '<path class="s" d="M2 2l5 3 4-3 4 4h2l-2 3v6H7V11L2 9z"/>',
  monx: '<path class="s" d="M4 2h5v3H4zM11 2h5v6h-5zM3 7h6v3H3z"/>' + wheels,
  sim1: '<path class="c" d="M1.500 1.500h14v7h-14z" stroke-width="2"/><path class="w" d="M4.500 10.500h11v6h-11z"/>' + warn,
  sim2: '<path class="w" d="M5.500 2.500h11v3h-11zM6.500 7.500h8v8h-8z" stroke-width="2"/><path class="b" d="M8.500 8.500h4v3h-4z"/>' + lockA,
  simx: '<path class="y b" d="M1.500 2.500h11v6h-11z"/><path class="w b" d="M7.500 7.500h9v5h-9zM1 3h12"/><circle cx="13" cy="14" r="3" fill="#d01030"/><path d="M12 13l2 2M14 13l-2 2" stroke="#fff"/>',
  hand: hand + '<path d="M15 8v7"/>',
  hand2: hand + '<path d="M4 12h9M5 7h8M15 8v7"/>',
  play: '<path class="s" d="M4 3l11 6-11 6z"/>',
  stop: '<path class="s" d="M4 4h11v11H4z"/>',
  pause: '<path class="s" d="M4 4h4v11H4zM10 4h4v11h-4z"/>',
  step: '<path class="s" d="M2 3l10 6-10 6zM13 3h3v12h-3z"/>',
  stepin: '<path d="M1 3l5 4-5 4zM7 3h1v8H7z" fill="#0000e0" stroke="#0000e0"/><path class="gy" d="M8.500 4.500h5v11h-8v-3h3zM14 7.500h3M14 12.500h3"/>',
  stepout: '<path class="s" d="M3 4h7v11H3zM11 3l4 4-4 4zM15 3h2v9h-2z"/><path d="M0 7.500h3M0 11.500h3"/>',
  ffwd: '<path class="s" d="M2 3l7 6-7 6zM9 3l7 6-7 6z"/>',
  end: '<path d="M2 4l11 5-11 5M15 3v12" stroke-width="2.500"/>',
  b1: hatchBox, b2: hatchBox, b3: hatchBox + '<path class="s" d="M6 1h6L9 5z"/>',
  b4: hatchBox + '<path class="s" d="M6 13h6l-3 4z"/>',
  b5: '<path d="M1 4.500h16" stroke-dasharray="2 1" stroke-width="2"/><path d="M3 6.500h12M9 5v9M6 10.500h6"/>',
  b6: '<path d="M4 4.500h12" stroke-dasharray="2 1" stroke-width="2"/><path d="M1 8.500h16M4.500 9v7M13.500 9v7M2 13.500h5M11 13.500h5"/>',
  b7: '<path d="M1 8.500h16M4.500 1v7M13.500 1v7M2 4.500h5M11 4.500h5"/><path d="M4 13h11" stroke-dasharray="2 1" stroke-width="2"/>',
  b8: '<path d="M9.500 1v6M7 4.500h5M1 8.500h16M4 10.500h11"/><path d="M1 14h7M11 14h6" stroke-dasharray="2 1" stroke-width="2"/>',
  b9: '<path d="M1 4h7M10 4h7" stroke-dasharray="2 1" stroke-width="2"/><path d="M1 8.500h16M9.500 9v7M7 12.500h5"/>',
  b10: '<path d="M3 4v5h11v6"/>',
  ind: '<path d="M9 3.500h7M9 6.500h7M9 9.500h7M9 12.500h5M1 3.500h6M1 12.500h6M9.500 1v16M1 8.500h6M4 5.500L1 8.500l3 3" stroke-width="1.500"/>',
  ind2: '<path d="M9 3.500h7M9 6.500h7M9 9.500h7M9 12.500h5M1 3.500h6M1 12.500h6M9.500 1v16M1 8.500h6M4 5.500l3 3-3 3" stroke-width="1.500"/>',
  lst: '<path d="M3 3.500h13M6 6.500h10M6 9.500h10M6 12.500h10M3 15.500h13"/>',
  lst2: '<path d="M6 12.500h8M3 15.500h13M6 9.500h8M6 5l2-3h4l2 3-2 3H6M4 3v3h4"/>',
  flag1: flag, flag2: flag + '<path d="M3 6V3h4l3 2M2 4l1 3 3-1"/>', flag3: flag + '<path d="M3 3h5l2 3M3 7V3"/>', flag4: flag + '<path d="M3 2l6 6M9 2L3 8"/>'
};

// "-" desactivado, "*" pulsado, "|" separador
const rows = [
  ['new open save | search | print preview | cut- copy paste- | paste- | undo- redo- | find replace- chg1- chg2- | info help whats',
   'tri- live* findwarn | plcwarn | plcwarn2 | pausemon- pauseg- | dl ul cmp | gear1 gear2 gear3 | plc1 plc2- plc3* plc4 | wave- timing | lock unlock'],
  ['zooms- zoomx- zoomo- zoomi- | grid-* comment* list* rungs- ladder* tree- | sma* ci | ptr-* no- nc- orno- ornc- vl- hl- coil- coilc- fb- fb2- inst- line- linex-',
   'mon-* | layers grid2 | watchdoc a1- a2- a3- | treeboxes | ff doc1- doc2- doc3-'],
  ['w1* w2* w3* w4 w5 w6 | cross sym ff2 list2 hex | n10 n10y n16 | up- down- monx-',
   'sim1 sim2* | simx | hand- hand2- play- stop pause step stepin stepout- ffwd end',
   'b1- b2- b3- b4- b5- b6- b7- b8- b9- | b10-'],
  ['ind- ind2- | lst- lst2- | flag1- flag2- flag3- flag4-']
];

function boton(item) {
  if (item === '|') return '<span class="sep"></span>';
  const name = item.replace(/[-*]/g, '');
  const on = item.includes('*') ? ' on' : '';
  const off = item.includes('-') ? ' disabled' : '';
  return `<button type="button" class="tool${on}"${off} aria-label="${name}"><svg viewBox="0 0 18 18">${icons[name]}</svg></button>`;
}

document.getElementById('toolbars').innerHTML = rows.map((groups, r) => `
  <div class="row row-${r + 1}">
    ${groups.map((g, i) => `<div class="group${i === 1 ? ' push' : ''}">${g.split(' ').map(boton).join('')}</div>`).join('')}
  </div>`).join('');

// filas vacías de la hoja
let filas = '';
for (let i = 0; i < 8; i++) {
  filas += `<tr${i === 0 ? ' class="current"' : ''}>${'<td></td>'.repeat(8)}</tr>`;
}
document.getElementById('rows').innerHTML = filas;
```
